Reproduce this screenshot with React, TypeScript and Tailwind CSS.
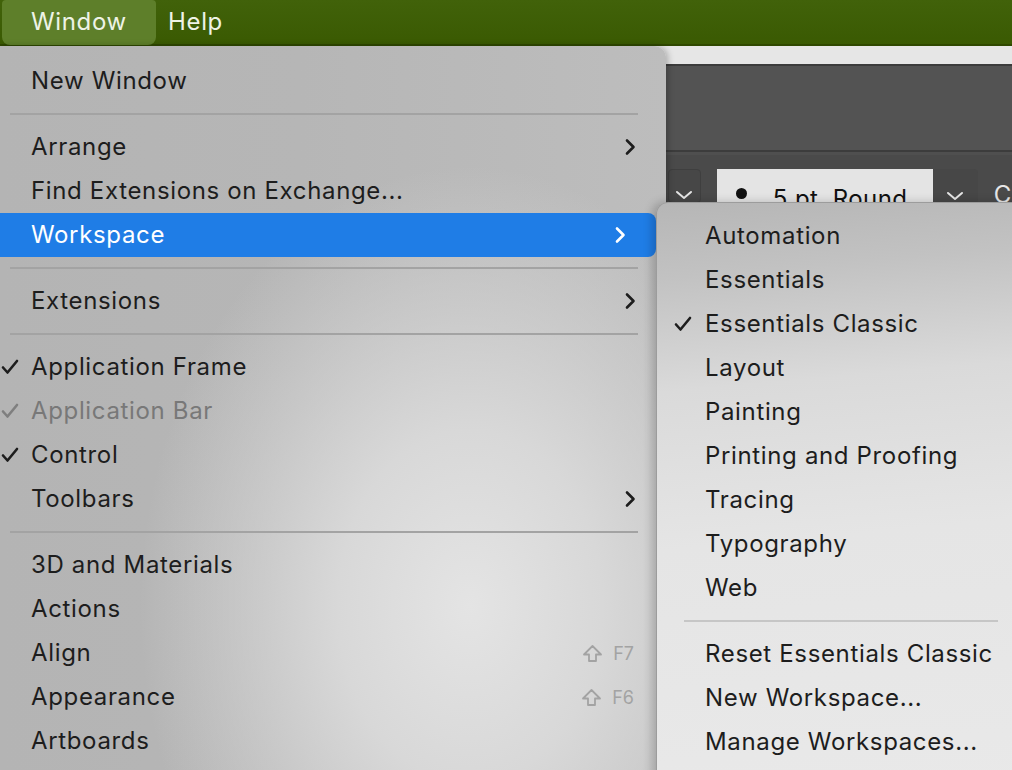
import React from 'react';

type Item =
  | { kind: 'sep' }
  | { kind: 'item'; label: string; check?: boolean; disabled?: boolean; sub?: boolean; active?: boolean; shortcut?: string };

const MAIN: Item[] = [
  { kind: 'item', label: 'New Window' },
  { kind: 'sep' },
  { kind: 'item', label: 'Arrange', sub: true },
  { kind: 'item', label: 'Find Extensions on Exchange...' },
  { kind: 'item', label: 'Workspace', sub: true, active: true },
  { kind: 'sep' },
  { kind: 'item', label: 'Extensions', sub: true },
  { kind: 'sep' },
  { kind: 'item', label: 'Application Frame', check: true },
  { kind: 'item', label: 'Application Bar', check: true, disabled: true },
  { kind: 'item', label: 'Control', check: true },
  { kind: 'item', label: 'Toolbars', sub: true },
  { kind: 'sep' },
  { kind: 'item', label: '3D and Materials' },
  { kind: 'item', label: 'Actions' },
  { kind: 'item', label: 'Align', shortcut: 'F7' },
  { kind: 'item', label: 'Appearance', shortcut: 'F6' },
  { kind: 'item', label: 'Artboards' },
];

const WORKSPACES: Item[] = [
  { kind: 'item', label: 'Automation' },
  { kind: 'item', label: 'Essentials' },
  { kind: 'item', label: 'Essentials Classic', check: true },
  { kind: 'item', label: 'Layout' },
  { kind: 'item', label: 'Painting' },
  { kind: 'item', label: 'Printing and Proofing' },
  { kind: 'item', label: 'Tracing' },
  { kind: 'item', label: 'Typography' },
  { kind: 'item', label: 'Web' },
  { kind: 'sep' },
  { kind: 'item', label: 'Reset Essentials Classic' },
  { kind: 'item', label: 'New Workspace...' },
  { kind: 'item', label: 'Manage Workspaces...' },
];

function Check({ color }: { color: string }) {
  return (
    <svg width="18" height="16" viewBox="0 0 18 16" fill="none">
      <path d="M2 8.5 L6.5 13.5 L16 2" stroke={color} strokeWidth="2.6" strokeLinecap="round" strokeLinejoin="round" />
    </svg>
  );
}

function Chevron({ color }: { color: string }) {
  return (
    <svg width="12" height="18" viewBox="0 0 12 18" fill="none">
      <path d="M3 2.5 L9.5 9 L3 15.5" stroke={color} strokeWidth="2.6" strokeLinecap="round" strokeLinejoin="round" />
    </svg>
  );
}

function ChevronDown() {
  return (
    <svg width="18" height="10" viewBox="0 0 18 10" fill="none">
      <path d="M2 2 L9 8 L16 2" stroke="#e6e6e6" strokeWidth="2" strokeLinecap="round" strokeLinejoin="round" />
    </svg>
  );
}

function ShiftKey() {
  return (
    <svg width="21" height="19" viewBox="0 0 21 19" fill="none">
      <path d="M10.5 2 L19 10.5 L14 10.5 L14 17 L7 17 L7 10.5 L2 10.5 Z" stroke="#a3a3a3" strokeWidth="1.8" strokeLinejoin="round" />
    </svg>
  );
}

function MainMenu() {
  return (
    <div className="absolute left-0 top-[46px] w-[666px] h-[740px] rounded-tr-[12px] pt-[13px] bg-[radial-gradient(ellipse_330px_440px_at_470px_560px,#e4e4e4_0%,#d8d8d8_40%,rgba(190,190,190,0)_100%),linear-gradient(90deg,#b4b4b4_0%,#b6b6b6_45%,#bdbdbd_100%)] shadow-[2px_0_6px_rgba(0,0,0,0.25)]">
      {MAIN.map((it, i) =>
        it.kind === 'sep' ? (
          <div key={i} className="h-[22px] flex items-center pl-[10px] pr-[28px]">
            <div className="h-[2px] w-full bg-[#a3a3a3]" />
          </div>
        ) : (
          <div
            key={i}
            className={`relative h-[44px] flex items-center pl-[31px] pr-[30px] ${
              it.active ? 'bg-[#1f7de6] text-white rounded-r-[8px] mr-[10px]' : it.disabled ? 'text-[#787878]' : 'text-[#1d1d1d]'
            }`}
          >
            {it.check && (
              <span className="absolute left-[1px] top-[14px]">
                <Check color={it.disabled ? '#7f7f7f' : '#1d1d1d'} />
              </span>
            )}
            <span className="flex-1">{it.label}</span>
            {it.sub && <Chevron color={it.active ? '#ffffff' : '#1d1d1d'} />}
            {it.shortcut && (
              <span className="flex items-center gap-[10px] text-[18px] tracking-normal text-[#a3a3a3] mr-[2px]">
                <ShiftKey />
                {it.shortcut}
              </span>
            )}
          </div>
        )
      )}
    </div>
  );
}

function SubMenu() {
  return (
    <div className="absolute left-[656px] top-[202px] w-[380px] h-[600px] rounded-tl-[12px] pt-[11px] border-l border-t border-[#9c9c9c] bg-[linear-gradient(175deg,#b6b6b6_0%,#c2c2c2_12%,#dadada_30%,#e5e5e5_55%,#e9e9e9_100%)] shadow-[-4px_0_10px_rgba(0,0,0,0.2)]">
      {WORKSPACES.map((it, i) =>
        it.kind === 'sep' ? (
          <div key={i} className="h-[22px] flex items-center pl-[27px] pr-[38px]">
            <div className="h-[2px] w-full bg-[#c6c6c6]" />
          </div>
        ) : (
          <div key={i} className="relative h-[44px] flex items-center pl-[48px] text-[#1d1d1d]">
            {it.check && (
              <span className="absolute left-[17px] top-[14px]">
                <Check color="#1d1d1d" />
              </span>
            )}
            <span className="whitespace-nowrap">{it.label}</span>
          </div>
        )
      )}
    </div>
  );
}

export default function App() {
  return (
    <div className="relative w-[1012px] h-[770px] overflow-hidden bg-[#4a4a4a] text-[24px] font-['Inter','Liberation_Sans',sans-serif] tracking-[0.65px]">
      {/* barre de menus */}
      <div className="h-[46px] flex items-center bg-[linear-gradient(180deg,#41620a_0%,#3a5a02_100%)] border-b-2 border-[#2f4800] text-[#eef3e6]">
        <div className="ml-[2px] h-[45px] w-[154px] flex items-center pl-[29px] rounded-b-[8px] rounded-t-[4px] bg-[#5e7f2a]">Window</div>
        <div className="ml-[12px]">Help</div>
      </div>

      {/* fond de l'application */}
      <div className="h-[18px] bg-[#e6e6e6]" />
      <div className="h-[88px] bg-[#535353] border-t-2 border-b-2 border-[#3c3c3c]" />
      <div className="h-[3px] bg-[#4f4f4f]" />
      <div className="flex items-start gap-[16px] pl-[668px] pt-[14px]">
        <div className="h-[34px] w-[42px] rounded-[4px] bg-[#474747] border border-[#3f3f3f] flex items-end justify-center pb-[2px]">
          <ChevronDown />
        </div>
        <div className="flex h-[34px]">
          <div className="w-[216px] bg-[#e4e4e4] flex items-end pl-[19px] gap-[26px] text-[#111] leading-none tracking-[0.4px]">
            <span className="w-[11px] h-[11px] rounded-full bg-[#111] mb-[4px]" />
            <span className="translate-y-[8px]">5 pt. Round</span>
          </div>
          <div className="w-[45px] bg-[#474747] rounded-r-[4px] flex items-end justify-center pb-[2px]">
            <ChevronDown />
          </div>
        </div>
        <span className="text-[#e6e6e6] translate-y-[8px]">C</span>
      </div>

      <MainMenu />
      <SubMenu />
    </div>
  );
}
